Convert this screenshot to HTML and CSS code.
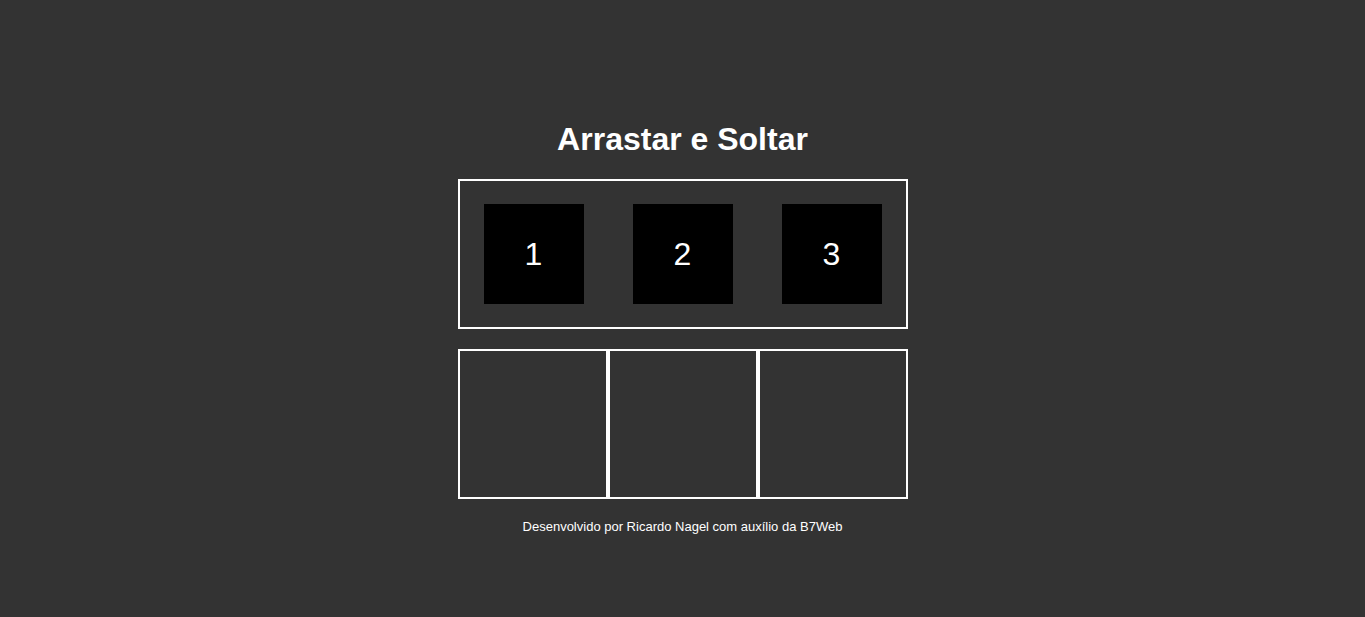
FILE: index.html
```html
<!DOCTYPE html>
<html lang="pt-BR">
<head>
<meta charset="utf-8">
<title>Arrastar e Soltar</title>
<link rel="stylesheet" href="styles.css">
</head>
<body>
<main class="page">
  <h1 class="title">Arrastar e Soltar</h1>
  <div class="neutral-area">
    <div class="item">1</div>
    <div class="item">2</div>
    <div class="item">3</div>
  </div>
  <div class="areas">
    <div class="area"></div>
    <div class="area"></div>
    <div class="area"></div>
  </div>
  <p class="footer">Desenvolvido por Ricardo Nagel com auxílio da B7Web</p>
</main>
</body>
</html>
```
FILE: styles.css
```css
html, body {
  margin: 0;
  padding: 0;
  background: #333333;
  color: #ffffff;
  font-family: "Liberation Sans", Arial, sans-serif;
}

.page {
  display: flex;
  flex-direction: column;
  align-items: center;
  padding-top: 121px;
}

.title {
  margin: 0 0 21px 0;
  font-size: 32px;
  font-weight: bold;
  line-height: 37px;
}

.neutral-area {
  box-sizing: border-box;
  width: 450px;
  height: 150px;
  padding: 0 24px;
  border: 2px solid #ffffff;
  display: flex;
  gap: 49px;
  align-items: center;
}

.item {
  width: 100px;
  height: 100px;
  background: #000000;
  color: #ffffff;
  font-size: 32px;
  display: flex;
  align-items: center;
  justify-content: center;
}

.areas {
  display: flex;
  margin-top: 20px;
}

.area {
  box-sizing: border-box;
  width: 150px;
  height: 150px;
  border: 2px solid #ffffff;
}

.footer {
  margin: 20px 0 0 0;
  font-size: 13px;
  line-height: 15px;
}
```
